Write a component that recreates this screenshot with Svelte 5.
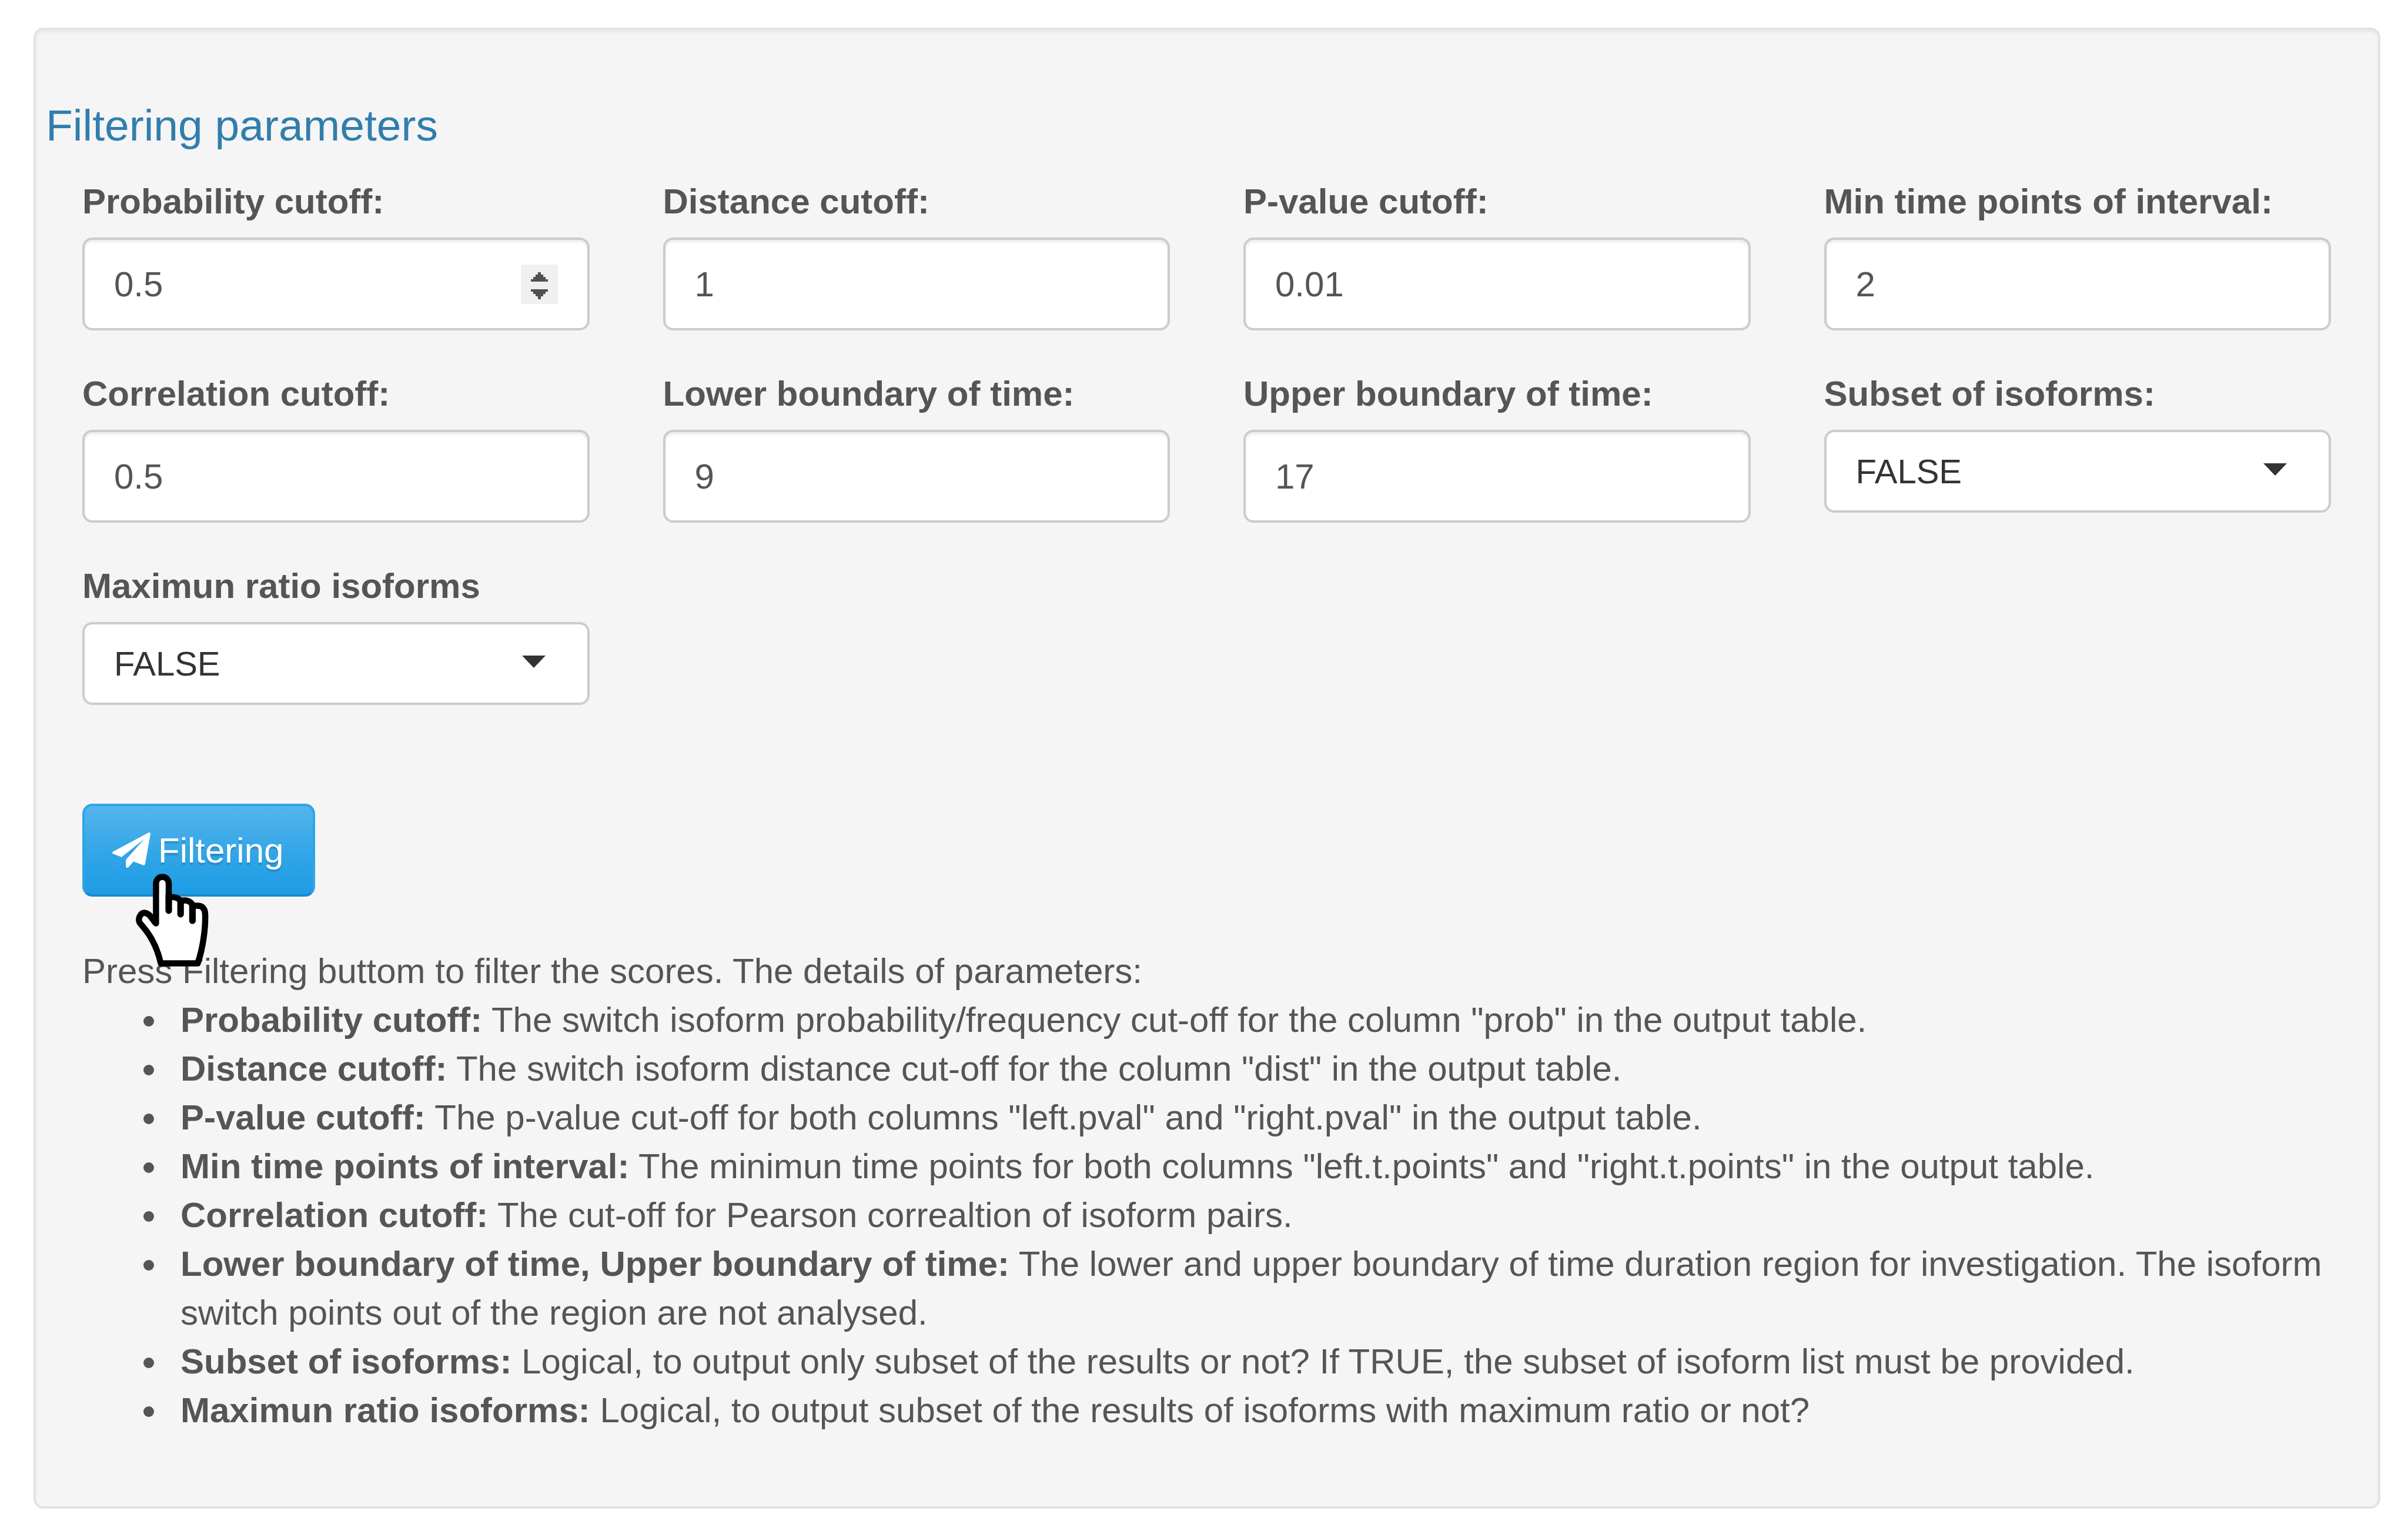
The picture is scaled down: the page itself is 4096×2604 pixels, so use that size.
<script>
  const fields = [
    { id: 'prob', label: 'Probability cutoff:', value: '0.5', spinner: true },
    { id: 'dist', label: 'Distance cutoff:', value: '1' },
    { id: 'pval', label: 'P-value cutoff:', value: '0.01' },
    { id: 'points', label: 'Min time points of interval:', value: '2' },
    { id: 'cor', label: 'Correlation cutoff:', value: '0.5' },
    { id: 'lower', label: 'Lower boundary of time:', value: '9' },
    { id: 'upper', label: 'Upper boundary of time:', value: '17' },
    { id: 'subset', label: 'Subset of isoforms:', value: 'FALSE', options: ['FALSE', 'TRUE'] },
    { id: 'ratio', label: 'Maximun ratio isoforms', value: 'FALSE', options: ['FALSE', 'TRUE'] }
  ];

  const details = [
    ['Probability cutoff:', 'The switch isoform probability/frequency cut-off for the column "prob" in the output table.'],
    ['Distance cutoff:', 'The switch isoform distance cut-off for the column "dist" in the output table.'],
    ['P-value cutoff:', 'The p-value cut-off for both columns "left.pval" and "right.pval" in the output table.'],
    ['Min time points of interval:', 'The minimun time points for both columns "left.t.points" and "right.t.points" in the output table.'],
    ['Correlation cutoff:', 'The cut-off for Pearson correaltion of isoform pairs.'],
    ['Lower boundary of time, Upper boundary of time:', 'The lower and upper boundary of time duration region for investigation. The isoform switch points out of the region are not analysed.'],
    ['Subset of isoforms:', 'Logical, to output only subset of the results or not? If TRUE, the subset of isoform list must be provided.'],
    ['Maximun ratio isoforms:', 'Logical, to output subset of the results of isoforms with maximum ratio or not?']
  ];
</script>

<main class="panel">
  <h4>Filtering parameters</h4>
  <form class="body" onsubmit={(e) => e.preventDefault()}>
    <div class="grid">
      {#each fields as f (f.id)}
        <div class="field">
          <label for={f.id}>{f.label}</label>
          {#if f.options}
            <div class="control">
              <select id={f.id} value={f.value}>
                {#each f.options as o}
                  <option value={o}>{o}</option>
                {/each}
              </select>
              <svg class="caret" viewBox="0 0 40 21" aria-hidden="true"><path d="M0 0H40L20 21Z" /></svg>
            </div>
          {:else}
            <div class="control">
              <input id={f.id} type="number" step="any" value={f.value} />
              {#if f.spinner}
                <svg class="spinner" viewBox="0 0 15 16" shape-rendering="crispEdges" aria-hidden="true">
                  <rect width="15" height="16" fill="#f0f0f0" />
                  <path
                    fill="#505050"
                    d="M7 3h1v1h1v1h1v1h1v1H4V6h1V5h1V4h1zM4 10h7v1h-1v1H9v1H8v1H7v-1H6v-1H5v-1H4z"
                  />
                </svg>
              {/if}
            </div>
          {/if}
        </div>
      {/each}
    </div>

    <div class="action">
      <button type="submit">
        <svg class="plane" viewBox="0 0 1792 1792" preserveAspectRatio="none" aria-hidden="true">
          <path
            d="M1764 11q33 24 27 64l-256 1536q-5 29-32 45-14 8-31 8-11 0-24-5l-453-185-242 295q-18 23-49 23-13 0-22-4-19-7-30.500-23.500t-11.500-36.500v-349l864-1059-1069 925-395-162q-37-14-40-55-2-40 32-59l1664-960q15-9 32-9 20 0 36 11z"
          />
        </svg>
        <span>Filtering</span>
      </button>
      <svg class="pointer" viewBox="0 0 166 212" aria-hidden="true">
        <path
          class="skin"
          d="M46 114V24C46 3 75 3 75 24V55C88 53 96 55 102 63C115 60 126 63 130 74H141C153 74 158 82 158 94C159 125 153 170 141 205H57C50 175 38 148 20 126L9 113C4 104 10 90 20 90C33 91 38 107 46 114Z"
        />
        <path class="crease" d="M75 50V85M102 62V93M129 73V108" />
      </svg>
    </div>

    <p>Press Filtering buttom to filter the scores. The details of parameters:</p>
    <ul>
      {#each details as [term, text]}
        <li><strong>{term}</strong> {text}</li>
      {/each}
    </ul>
  </form>
</main>

<style>
  :global(body) {
    background: #fff;
  }
  .panel {
    box-sizing: border-box;
    margin: 47px 47px 38px 57px;
    padding: 121px 80px 122px 17px;
    border: 4px solid #e3e3e3;
    border-radius: 17px;
    background: #f5f5f5;
    box-shadow: inset 0 4px 4px rgba(0, 0, 0, 0.05);
    color: #555;
    font-family: 'Liberation Sans', Arial, sans-serif;
    font-size: 60px;
    line-height: 83px;
  }
  h4 {
    margin: 0 0 47px;
    color: #317eac;
    font-size: 75px;
    font-weight: 400;
    line-height: 82px;
  }
  .body {
    padding-left: 62px;
  }
  .grid {
    display: grid;
    grid-template-columns: repeat(4, minmax(0, 1fr));
    gap: 66px 125px;
    align-items: start;
  }
  label {
    display: block;
    margin-bottom: 20px;
    font-weight: 700;
    white-space: nowrap;
  }
  .control {
    position: relative;
  }
  input,
  select {
    display: block;
    box-sizing: border-box;
    width: 100%;
    margin: 0;
    padding: 0 50px;
    border: 4px solid #ccc;
    border-radius: 17px;
    background: #fff;
    font: inherit;
    appearance: none;
  }
  input {
    height: 158px;
    color: #555;
    box-shadow: inset 0 4px 4px rgba(0, 0, 0, 0.075);
    appearance: textfield;
  }
  select {
    height: 141px;
    color: #333;
    font-size: 58px;
  }
  .caret {
    position: absolute;
    top: 57px;
    right: 75px;
    width: 40px;
    height: 21px;
    fill: #333;
    pointer-events: none;
  }
  .spinner {
    position: absolute;
    top: 46px;
    right: 54px;
    width: 63px;
    height: 67px;
  }
  .action {
    position: relative;
    margin-top: 168px;
  }
  button {
    display: flex;
    align-items: center;
    gap: 13px;
    height: 158px;
    padding: 0 50px 0 47px;
    border: 4px solid #2fa4e7;
    border-bottom-color: #178acc;
    border-radius: 17px;
    background: linear-gradient(#54b4eb, #2fa4e7 60%, #1d9ce5);
    color: #fff;
    font: inherit;
    text-shadow: 0 4px 2px rgba(0, 0, 0, 0.15);
  }
  .plane {
    width: 65px;
    height: 60px;
    fill: #fff;
  }
  .pointer {
    position: absolute;
    top: 118px;
    left: 91px;
    width: 124px;
    height: 159px;
    overflow: visible;
  }
  .skin {
    fill: #fff;
    stroke: #000;
    stroke-width: 14;
    stroke-linejoin: round;
  }
  .crease {
    fill: none;
    stroke: #000;
    stroke-width: 15;
    stroke-linecap: round;
  }
  p {
    margin: 85px 0 0;
  }
  ul {
    margin: 0;
    padding-left: 147px;
    list-style: disc;
  }
  li {
    padding-left: 20px;
  }
</style>
